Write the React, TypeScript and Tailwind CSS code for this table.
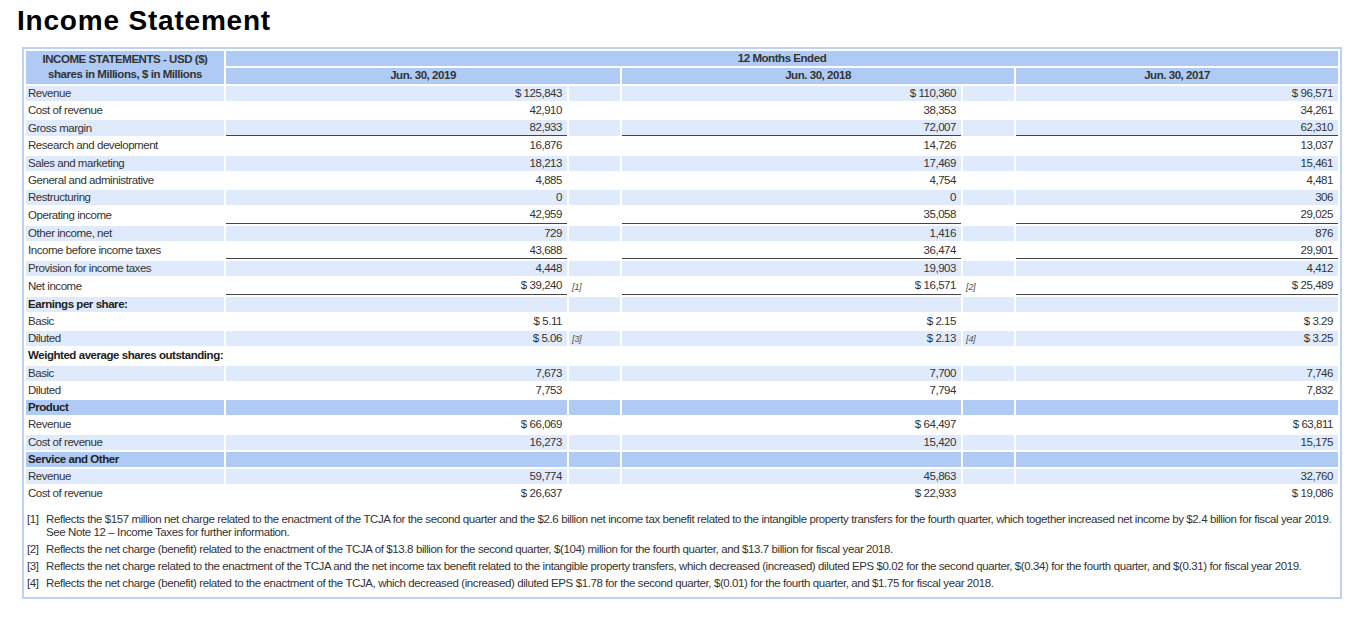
type Row = {
  label: string
  values?: string[]
  notes?: string[]
  bold?: boolean
  head?: boolean
  under?: boolean
}

const rows: Row[] = [
  { label: 'Revenue', values: ['$ 125,843', '$ 110,360', '$ 96,571'] },
  { label: 'Cost of revenue', values: ['42,910', '38,353', '34,261'] },
  { label: 'Gross margin', values: ['82,933', '72,007', '62,310'], under: true },
  { label: 'Research and development', values: ['16,876', '14,726', '13,037'] },
  { label: 'Sales and marketing', values: ['18,213', '17,469', '15,461'] },
  { label: 'General and administrative', values: ['4,885', '4,754', '4,481'] },
  { label: 'Restructuring', values: ['0', '0', '306'] },
  { label: 'Operating income', values: ['42,959', '35,058', '29,025'], under: true },
  { label: 'Other income, net', values: ['729', '1,416', '876'] },
  { label: 'Income before income taxes', values: ['43,688', '36,474', '29,901'], under: true },
  { label: 'Provision for income taxes', values: ['4,448', '19,903', '4,412'] },
  { label: 'Net income', values: ['$ 39,240', '$ 16,571', '$ 25,489'], notes: ['[1]', '[2]'], under: true },
  { label: 'Earnings per share:', bold: true },
  { label: 'Basic', values: ['$ 5.11', '$ 2.15', '$ 3.29'] },
  { label: 'Diluted', values: ['$ 5.06', '$ 2.13', '$ 3.25'], notes: ['[3]', '[4]'] },
  { label: 'Weighted average shares outstanding:', bold: true },
  { label: 'Basic', values: ['7,673', '7,700', '7,746'] },
  { label: 'Diluted', values: ['7,753', '7,794', '7,832'] },
  { label: 'Product', bold: true, head: true },
  { label: 'Revenue', values: ['$ 66,069', '$ 64,497', '$ 63,811'] },
  { label: 'Cost of revenue', values: ['16,273', '15,420', '15,175'] },
  { label: 'Service and Other', bold: true, head: true },
  { label: 'Revenue', values: ['59,774', '45,863', '32,760'] },
  { label: 'Cost of revenue', values: ['$ 26,637', '$ 22,933', '$ 19,086'] },
]

const footnotes: [string, React.ReactNode][] = [
  [
    '[1]',
    <>
      Reflects the $157 million net charge related to the enactment of the TCJA for the second quarter and the $2.6 billion net income tax benefit related to the intangible property transfers for the fourth quarter, which together increased net income by $2.4 billion for fiscal year 2019.
      <br />
      See Note 12 – Income Taxes for further information.
    </>,
  ],
  ['[2]', 'Reflects the net charge (benefit) related to the enactment of the TCJA of $13.8 billion for the second quarter, $(104) million for the fourth quarter, and $13.7 billion for fiscal year 2018.'],
  ['[3]', 'Reflects the net charge related to the enactment of the TCJA and the net income tax benefit related to the intangible property transfers, which decreased (increased) diluted EPS $0.02 for the second quarter, $(0.34) for the fourth quarter, and $(0.31) for fiscal year 2019.'],
  ['[4]', 'Reflects the net charge (benefit) related to the enactment of the TCJA, which decreased (increased) diluted EPS $1.78 for the second quarter, $(0.01) for the fourth quarter, and $1.75 for fiscal year 2018.'],
]

function ValueCells({ row }: { row: Row }) {
  const cells = []
  for (let i = 0; i < 3; i++) {
    const v = row.values?.[i] ?? ''
    cells.push(
      <td
        key={'v' + i}
        className={`p-0 pr-[5px] text-right whitespace-nowrap ${row.under ? 'border-b border-[#444]' : ''}`}
      >
        {v}
      </td>
    )
    if (i < 2) {
      cells.push(
        <td key={'n' + i} className="p-0 pl-[3px] text-left text-[9.5px] italic text-[#555]">
          {row.notes?.[i] ?? ''}
        </td>
      )
    }
  }
  return <>{cells}</>
}

export default function App() {
  return (
    <div className="min-h-screen bg-white text-[#333] font-['Liberation_Sans',Arial,sans-serif]">
      <h1 className="pt-[6px] pl-[17px] text-[28px] leading-[30px] font-bold tracking-[0.8px] text-black">
        Income Statement
      </h1>

      <div className="ml-[22px] mt-[11px] w-[1320px] border-2 border-[#bcd2f4] pb-[4px] tracking-[-0.45px]">
        <table className="w-full table-fixed border-separate border-spacing-[2px] text-[11.5px] leading-[15.25px]">
          <colgroup>
            <col className="w-[198px]" />
            <col className="w-[341px]" />
            <col className="w-[51px]" />
            <col className="w-[339px]" />
            <col className="w-[51px]" />
            <col />
          </colgroup>
          <thead>
            <tr className="bg-[#aecaf5] font-bold text-[#333]">
              <th rowSpan={2} className="p-0 text-center align-middle leading-[15px]">
                INCOME STATEMENTS - USD ($)
                <br />
                shares in Millions, $ in Millions
              </th>
              <th colSpan={5} className="p-0 text-center">12 Months Ended</th>
            </tr>
            <tr className="bg-[#aecaf5] font-bold text-[#333]">
              <th colSpan={2} className="p-0 text-center">Jun. 30, 2019</th>
              <th colSpan={2} className="p-0 text-center">Jun. 30, 2018</th>
              <th className="p-0 text-center">Jun. 30, 2017</th>
            </tr>
          </thead>
          <tbody>
            {rows.map((row, i) => (
              <tr
                key={i}
                className={row.head ? 'bg-[#aecaf5]' : i % 2 === 0 ? 'bg-[#dfebfc]' : 'bg-white'}
              >
                <td className={`p-0 pl-[2px] whitespace-nowrap ${row.bold ? 'font-bold text-[#222]' : ''}`}>
                  {row.label}
                </td>
                <ValueCells row={row} />
              </tr>
            ))}
          </tbody>
        </table>

        <table className="mt-[6px] w-full border-separate border-spacing-[2px] text-[11.5px] leading-[13px] tracking-[-0.4px]">
          <tbody>
            {footnotes.map(([mark, text]) => (
              <tr key={mark}>
                <td className="w-[18px] p-0 py-[1px] pl-[1px] align-top whitespace-nowrap">{mark}</td>
                <td className="p-0 py-[1px] align-top">{text}</td>
              </tr>
            ))}
          </tbody>
        </table>
      </div>
    </div>
  )
}
